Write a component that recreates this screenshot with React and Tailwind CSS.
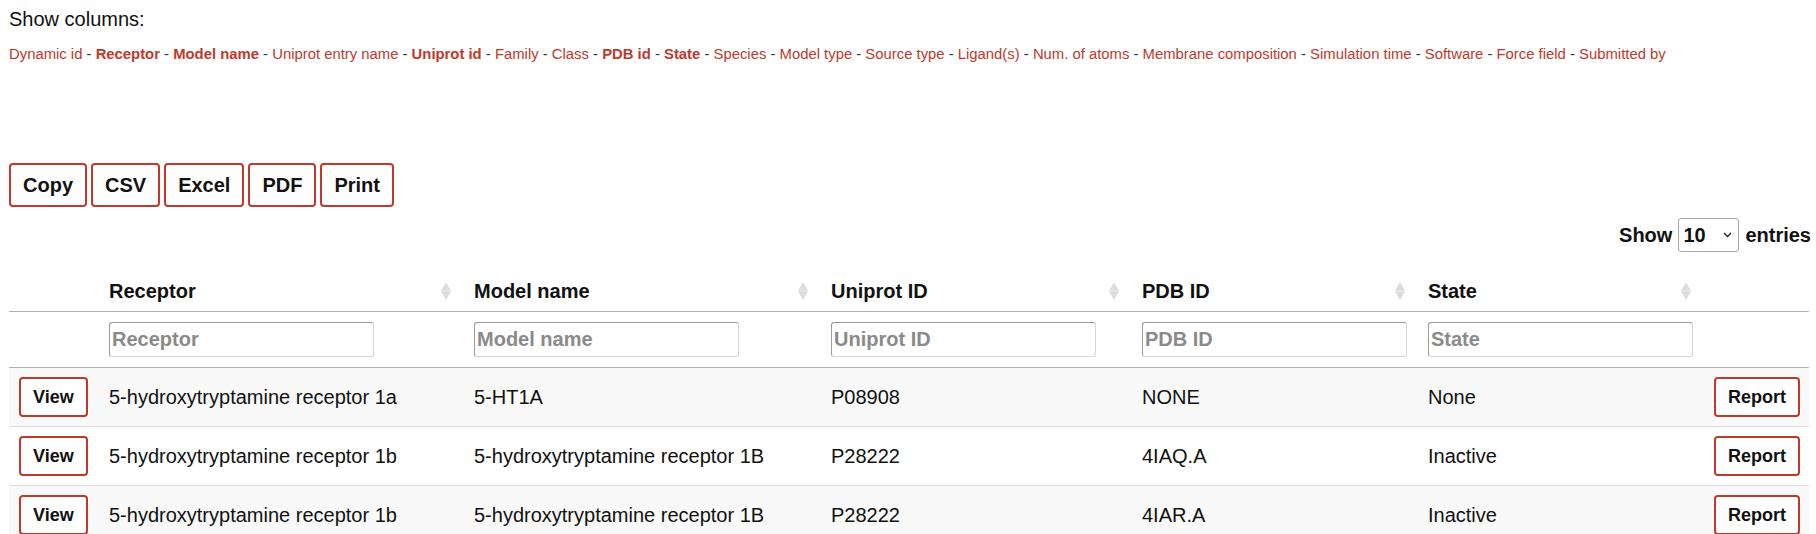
const columns = [
  { name: 'Dynamic id' },
  { name: 'Receptor', on: true },
  { name: 'Model name', on: true },
  { name: 'Uniprot entry name' },
  { name: 'Uniprot id', on: true },
  { name: 'Family' },
  { name: 'Class' },
  { name: 'PDB id', on: true },
  { name: 'State', on: true },
  { name: 'Species' },
  { name: 'Model type' },
  { name: 'Source type' },
  { name: 'Ligand(s)' },
  { name: 'Num. of atoms' },
  { name: 'Membrane composition' },
  { name: 'Simulation time' },
  { name: 'Software' },
  { name: 'Force field' },
  { name: 'Submitted by' },
];

const heads = ['Receptor', 'Model name', 'Uniprot ID', 'PDB ID', 'State'];

const rows = [
  ['5-hydroxytryptamine receptor 1a', '5-HT1A', 'P08908', 'NONE', 'None'],
  ['5-hydroxytryptamine receptor 1b', '5-hydroxytryptamine receptor 1B', 'P28222', '4IAQ.A', 'Inactive'],
  ['5-hydroxytryptamine receptor 1b', '5-hydroxytryptamine receptor 1B', 'P28222', '4IAR.A', 'Inactive'],
];

function SortIcon() {
  return (
    <svg width="10" height="18" viewBox="0 0 10 18" className="shrink-0">
      <polygon points="5,0 10,8.8 0,8.8" fill="#dcdcdc" />
      <polygon points="0,9.2 10,9.2 5,18" fill="#dcdcdc" />
    </svg>
  );
}

function RedButton({ children, className = '' }) {
  return (
    <button
      className={`border-2 border-[#c0392b] rounded-[4px] bg-white px-3 font-bold text-[#111] ${className}`}
    >
      {children}
    </button>
  );
}

export default function App() {
  return (
    <div className="font-['Liberation_Sans',Arial,sans-serif] text-[#111] bg-white pl-[9px] pr-[7px] pt-2 min-h-[534px]">
      <div className="text-[20px] leading-[23px]">Show columns:</div>

      <div className="mt-[15px] text-[14.85px] leading-[17px] text-[#333]">
        {columns.map((c, i) => (
          <span key={c.name}>
            <span className={`text-[#c0392b] ${c.on ? 'font-bold' : ''}`}>{c.name}</span>
            {i < columns.length - 1 && ' - '}
          </span>
        ))}
      </div>

      <div className="mt-[100px] flex gap-[4px]">
        {['Copy', 'CSV', 'Excel', 'PDF', 'Print'].map((b) => (
          <RedButton key={b} className="py-2 text-[20px] leading-6">
            {b}
          </RedButton>
        ))}
      </div>

      <div className="mt-[11px] -mr-[2px] flex h-[34px] items-center justify-end gap-[6px] text-[20px] font-bold">
        <span>Show</span>
        <div className="flex h-[34px] w-[61px] items-center justify-between rounded-[3px] border border-[#a8a8a8] bg-white pl-[4px] pr-[6px]">
          <span>10</span>
          <svg width="9" height="6" viewBox="0 0 9 6">
            <path d="M1 1l3.5 3.5L8 1" fill="none" stroke="#222" strokeWidth="1.3" />
          </svg>
        </div>
        <span>entries</span>
      </div>

      <table className="mt-[19px] w-full table-fixed border-collapse text-[20px]">
        <colgroup>
          <col className="w-[90px]" />
          <col className="w-[365px]" />
          <col className="w-[357px]" />
          <col className="w-[311px]" />
          <col className="w-[286px]" />
          <col className="w-[286px]" />
          <col />
        </colgroup>
        <thead>
          <tr className="border-b border-[#b0b0b0]">
            <th className="py-2" />
            {heads.map((h) => (
              <th key={h} className="py-2 pl-[10px] pr-[13px] text-left font-bold leading-6">
                <div className="flex items-center justify-between">
                  <span>{h}</span>
                  <SortIcon />
                </div>
              </th>
            ))}
            <th className="py-2" />
          </tr>
          <tr className="border-b border-[#b0b0b0]">
            <td className="py-[10px]" />
            {heads.map((h) => (
              <td key={h} className="px-[10px] py-[10px]">
                <input
                  placeholder={h}
                  className="block h-[35px] w-[265px] rounded-[3px] border border-[#9a9a9a] border-r-[#d6d6d6] border-b-[#d6d6d6] px-[2px] text-[20px] font-bold placeholder:text-[#8a8a8a] outline-none"
                />
              </td>
            ))}
            <td className="py-[10px]" />
          </tr>
        </thead>
        <tbody>
          {rows.map((r, i) => (
            <tr key={i} className={`border-b border-[#dddddd] ${i % 2 === 0 ? 'bg-[#f9f9f9]' : 'bg-white'}`}>
              <td className="px-[10px] py-[9px]">
                <RedButton className="h-10 text-[18px] leading-5">View</RedButton>
              </td>
              {r.map((v, j) => (
                <td key={j} className="px-[10px] py-[9px] leading-6 whitespace-nowrap">
                  {v}
                </td>
              ))}
              <td className="px-[10px] py-[9px] text-right">
                <RedButton className="h-10 text-[18px] leading-5">Report</RedButton>
              </td>
            </tr>
          ))}
        </tbody>
      </table>
    </div>
  );
}
